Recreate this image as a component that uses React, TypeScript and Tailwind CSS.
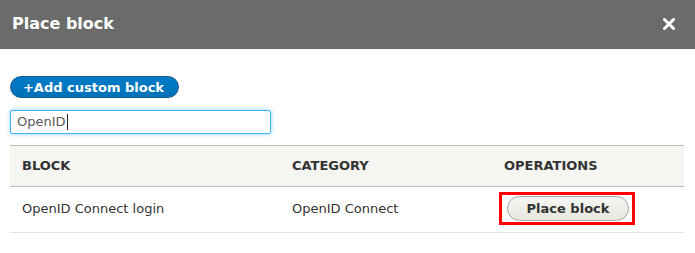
import React from 'react';

const font = { fontFamily: '"DejaVu Sans", "Noto Sans", sans-serif' };

const CloseIcon = () => (
    <svg width="12" height="12" viewBox="0 0 12 12" className="block">
        <path d="M1.5 1.5 L10.5 10.5 M10.5 1.5 L1.5 10.5" stroke="#fff" strokeWidth="3" strokeLinecap="square" />
    </svg>
);

const rows = [{ block: 'OpenID Connect login', category: 'OpenID Connect' }];

export default function App() {
    return (
        <div className="w-[695px] h-[253px] bg-white overflow-hidden" style={font}>
            <div className="h-[49px] bg-[#6b6b6b] flex items-center justify-between pl-3 pr-5">
                <h1 className="text-white font-bold text-[16px] leading-none pb-[2px]">Place block</h1>
                <button className="pb-[2px]" aria-label="Close"><CloseIcon /></button>
            </div>

            <div className="px-[10px] pt-[27px]">
                <button className="h-[22px] w-[169px] rounded-full border border-[#1e5c90] bg-gradient-to-b from-[#007bc6] to-[#0071b8] text-white font-bold text-[13px] leading-none flex items-center justify-center pr-[2px]">
                    +Add custom block
                </button>

                <div className="mt-[12px] w-[261px] h-[24px] border border-[#40b6ff] rounded-[2px] shadow-[0_0_4px_rgba(64,182,255,0.6)] flex items-center pl-[6px] text-[13px] text-[#595959]">
                    <span>OpenID</span>
                    <span className="w-px h-[16px] bg-[#222] ml-[1px]" />
                </div>

                <table className="mt-[11px] w-[674px] border-collapse text-[13px] text-[#333]">
                    <thead>
                        <tr className="bg-[#f5f5f2] border-t border-[#bfbfba] border-b border-b-[#bfbfba] h-[41px]">
                            <th className="w-[270px] text-left font-bold pl-3 uppercase">Block</th>
                            <th className="w-[212px] text-left font-bold pl-3 uppercase">Category</th>
                            <th className="text-left font-bold pl-3 uppercase">Operations</th>
                        </tr>
                    </thead>
                    <tbody>
                        {rows.map(r => (
                            <tr key={r.block} className="border-b border-[#e6e4df] h-[46px]">
                                <td className="pl-3 pb-[2px]">{r.block}</td>
                                <td className="pl-3 pb-[2px]">{r.category}</td>
                                <td className="pl-[7px] pb-[2px]">
                                    <span className="inline-flex border-[3px] border-[#ff0000] pl-[5px] pr-[3px] py-px">
                                        <button className="h-[25px] w-[122px] rounded-full border border-[#a6a6a6] bg-gradient-to-b from-[#f6f6f3] to-[#e7e7df] font-bold text-[13px] text-[#333] leading-none">
                                            Place block
                                        </button>
                                    </span>
                                </td>
                            </tr>
                        ))}
                    </tbody>
                </table>
            </div>
        </div>
    );
}
